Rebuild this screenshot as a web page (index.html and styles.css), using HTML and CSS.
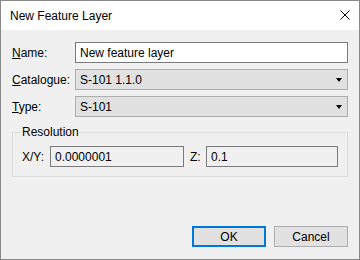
FILE: index.html
```html
<!DOCTYPE html>
<html lang="en">
<head>
  <meta charset="UTF-8">
  <title>New Feature Layer</title>
  <link rel="stylesheet" href="styles.css">
</head>
<body>
  <div class="window">
    <div class="titlebar">
      <span class="title">New Feature Layer</span>
      <svg class="close" width="10" height="10" viewBox="0 0 10 10">
        <path d="M0.5 0.5 L9.5 9.5 M9.5 0.5 L0.5 9.5" stroke="#000" stroke-width="1" fill="none"/>
      </svg>
    </div>

    <div class="content">
      <div class="form">
        <label class="label"><u>N</u>ame:</label>
        <input type="text" class="textbox" value="New feature layer">

        <label class="label"><u>C</u>atalogue:</label>
        <div class="combo">
          <span>S-101 1.1.0</span>
          <span class="arrow"></span>
        </div>

        <label class="label"><u>T</u>ype:</label>
        <div class="combo">
          <span>S-101</span>
          <span class="arrow"></span>
        </div>
      </div>

      <fieldset class="group">
        <legend>Resolution</legend>
        <div class="res-row">
          <label class="label">X/Y:</label>
          <input type="text" class="textbox readonly" value="0.0000001" readonly>
          <label class="label z-label">Z:</label>
          <input type="text" class="textbox readonly" value="0.1" readonly>
        </div>
      </fieldset>

      <div class="buttons">
        <button class="btn default">OK</button>
        <button class="btn">Cancel</button>
      </div>
    </div>
  </div>
</body>
</html>
```

FILE: styles.css
```css
body {
  margin: 0;
  font-family: 'Liberation Sans', Arial, sans-serif;
  font-size: 12px;
  color: #000;
  background: #fff;
}
.window {
  width: 360px;
  height: 260px;
  box-sizing: border-box;
  border: 1px solid #888;
  display: flex;
  flex-direction: column;
  background: #f0f0f0;
}
.titlebar {
  height: 29px;
  flex-shrink: 0;
  background: #fff;
  display: flex;
  align-items: center;
  justify-content: space-between;
  padding: 0 9px 0 9px;
}
.title {
  font-size: 12px;
}
.close {
  display: block;
  margin-top: -1px;
}
.content {
  flex: 1;
  display: flex;
  flex-direction: column;
  padding: 12px 11px 12px 11px;
}
.form {
  display: grid;
  grid-template-columns: 63px 1fr;
  row-gap: 6px;
  align-items: center;
}
.label {
  line-height: 14px;
}
.textbox {
  box-sizing: border-box;
  height: 21px;
  margin: 0;
  padding: 0 4px;
  border: 1px solid #7a7a7a;
  background: #fff;
  font-family: inherit;
  font-size: 12px;
  color: #000;
  outline: none;
  width: 100%;
}
.textbox.readonly {
  background: #f0f0f0;
}
.combo {
  box-sizing: border-box;
  height: 21px;
  border: 1px solid #adadad;
  background: #e1e1e1;
  display: flex;
  align-items: center;
  justify-content: space-between;
  padding: 0 5px 0 4px;
}
.arrow {
  width: 0;
  height: 0;
  border-left: 3.5px solid transparent;
  border-right: 3.5px solid transparent;
  border-top: 4px solid #000;
}
.group {
  margin: 7px 0 0 0;
  padding: 6px 9px 9px 9px;
  border: 1px solid #dcdcdc;
  min-width: 0;
}
.group legend {
  padding: 0 1px;
  margin-left: -1px;
  line-height: 16px;
}
.res-row {
  display: grid;
  grid-template-columns: 28px 134px 22px 1fr;
  align-items: center;
}
.z-label {
  padding-left: 6px;
}
.buttons {
  margin-top: auto;
  display: flex;
  justify-content: flex-end;
  gap: 8px;
}
.btn {
  box-sizing: border-box;
  width: 74px;
  height: 21px;
  margin: 0;
  padding: 0;
  border: 1px solid #adadad;
  background: #e1e1e1;
  font-family: inherit;
  font-size: 12px;
  color: #000;
}
.btn.default {
  border: 2px solid #0078d7;
}
```
